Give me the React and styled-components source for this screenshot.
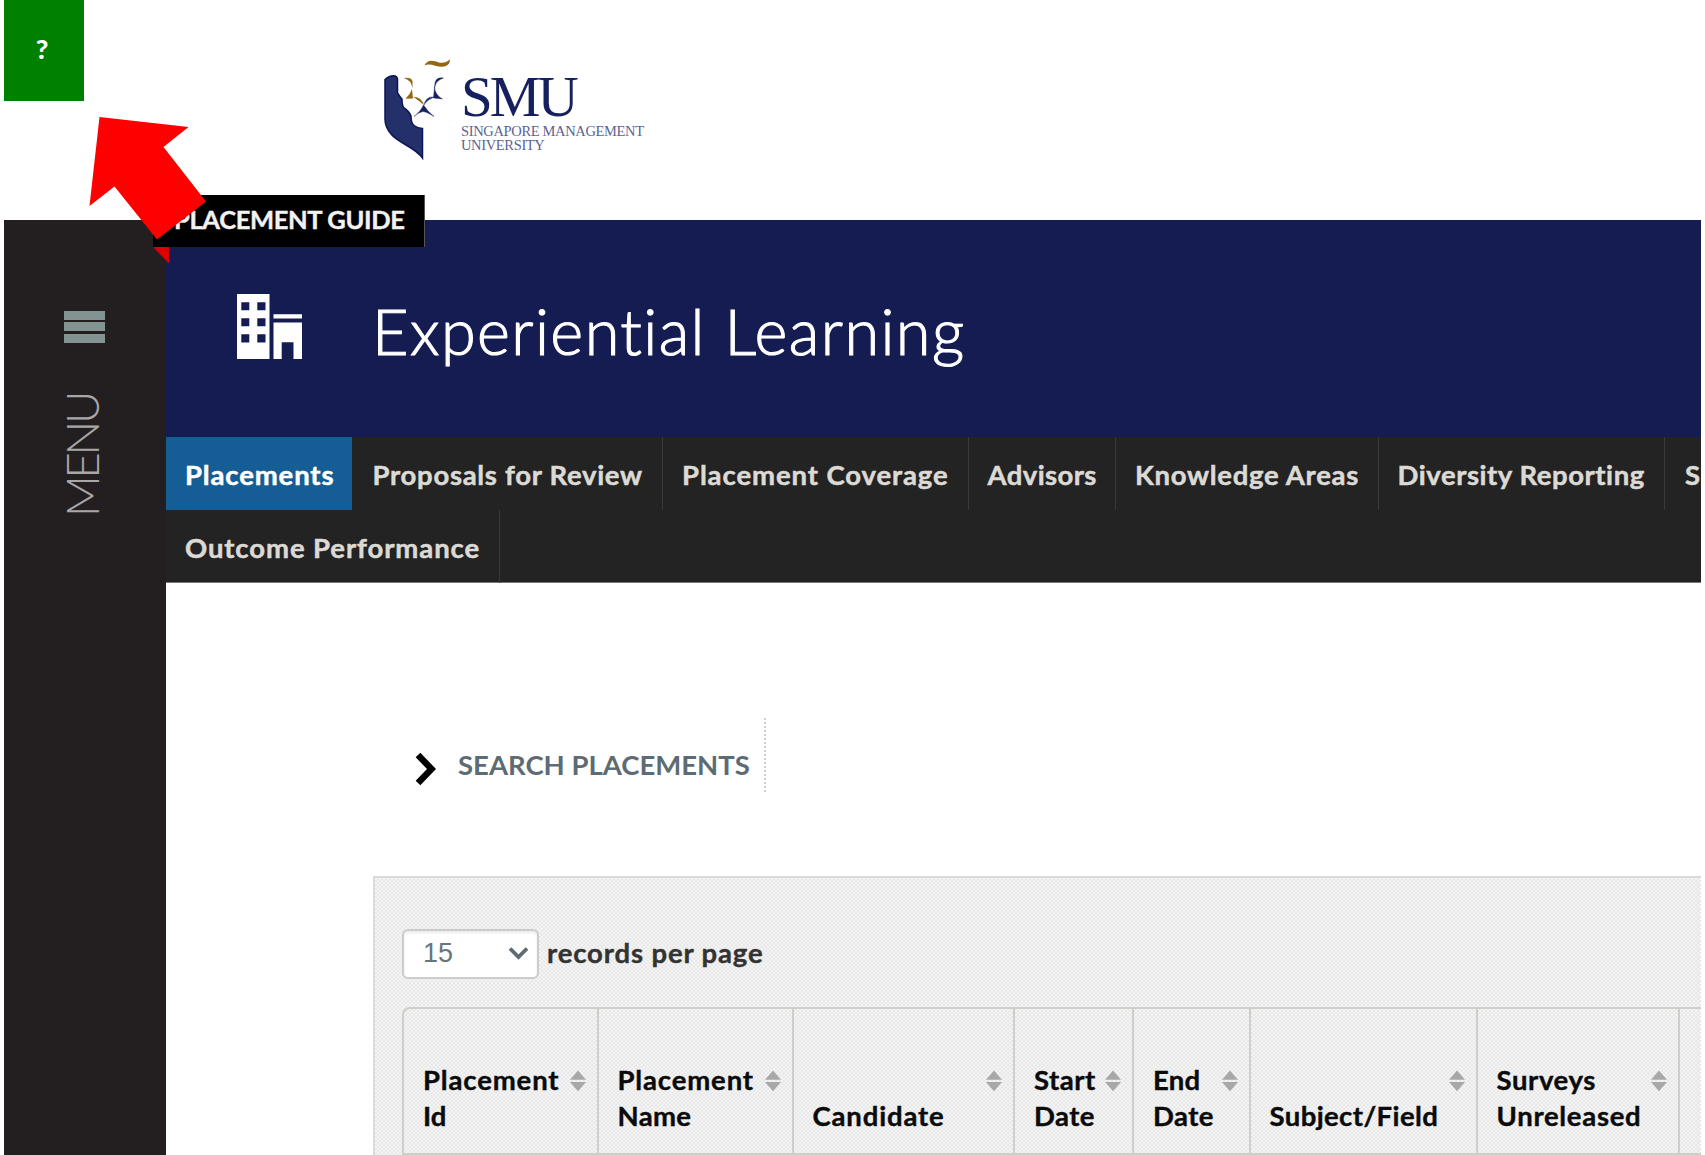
import React from "react";
import styled, { createGlobalStyle } from "styled-components";

const Global = createGlobalStyle`
  *{box-sizing:border-box}
  html,body{margin:0;background:#fff;overflow:hidden}
  body{font-family:Lato,"Open Sans",sans-serif;}
`;

const Page = styled.div`
  position: relative;
  width: 1705px;
  height: 1155px;
  padding: 0 4px;
  overflow: hidden;
  display: flex;
  flex-direction: column;
`;
const Header = styled.header`
  height: 220px;
  flex: none;
  display: flex;
  align-items: flex-start;
`;
const HelpButton = styled.div`
  width: 80px;
  height: 100.5px;
  background: #008000;
  color: #fff;
  font-size: 27px;
  font-weight: 900;
  line-height: 98px;
  padding-right: 4px;
  text-align: center;
`;
const Logo = styled.div`
  display: flex;
  margin: 58px 0 0 298px;
`;
const LogoText = styled.div`
  font-family: "Liberation Serif", serif;
  color: #17205f;
  margin: 10px 0 0 11px;
`;
const LogoName = styled.div`
  font-size: 57px;
  line-height: 58px;
  letter-spacing: -3px;
`;
const LogoSub = styled.div`
  font-size: 14.5px;
  line-height: 13.5px;
  position: relative;
  top: -1px;
  color: #5c6492;
  white-space: nowrap;
  letter-spacing: -0.35px;
`;
const Body = styled.div`
  flex: 1;
  min-height: 0;
  display: flex;
`;
const Sidebar = styled.aside`
  width: 162px;
  flex: none;
  background: #231f20;
  display: flex;
  flex-direction: column;
  align-items: center;
  padding: 91px 0 0 0;
`;
const Bars = styled.div`
  display: grid;
  gap: 2.6px;
  width: 41px;
  margin-right: 2px;
`;
const Bar = styled.div`
  height: 8.8px;
  background: #829392;
`;
const MenuLabel = styled.div`
  writing-mode: vertical-rl;
  transform: rotate(180deg);
  margin: 51px 6px 0 0;
  font-size: 46px;
  line-height: 56px;
  font-weight: 300;
  color: #a9a6a7;
  letter-spacing: -3.4px;
`;
const Main = styled.main`
  flex: 1;
  min-width: 0;
  overflow: hidden;
  display: flex;
  flex-direction: column;
`;
const Banner = styled.div`
  height: 217px;
  flex: none;
  background: #141c52;
  display: flex;
  padding: 74px 0 0 71px;
`;
const Title = styled.h1`
  margin: 0 0 0 70px;
  color: #fff;
  font-size: 63px;
  line-height: 73px;
  font-weight: 300;
  white-space: nowrap;
  letter-spacing: 1.4px;
  -webkit-text-stroke: 1.1px #fff;
`;
const Nav = styled.nav`
  flex: none;
  height: 146px;
  background: #232323;
  border-bottom: 1px solid #777;
`;
const NavRow = styled.div`
  display: flex;
  height: 73px;
`;
const NavItem = styled.div`
  width: ${(p) => p.$w}px;
  flex: none;
  padding-left: ${(p) => p.$pl}px;
  line-height: 75px;
  font-size: 27.5px;
  font-weight: 700;
  white-space: nowrap;
  color: ${(p) => (p.$active ? "#fff" : "#dcdad5")};
  background: ${(p) => (p.$active ? "#155d95" : "transparent")};
  border-right: ${(p) => (p.$active ? "0" : "1.5px solid #393939")};
  letter-spacing: ${(p) => p.$ls || 0}px;
  -webkit-text-stroke: 0.5px currentColor;
`;
const SearchToggle = styled.div`
  display: flex;
  width: 393px;
  height: 74px;
  flex: none;
  margin: 135px 0 0 207px;
  padding: 21px 0 0 41px;
  align-items: flex-start;
  border-right: 2px dotted #cfcfcf;
`;
const SearchChevron = styled.svg`
  margin-top: 13px;
  flex: none;
`;
const SearchText = styled.span`
  margin: 8px 0 0 21px;
  font-size: 27.5px;
  line-height: 36px;
  font-weight: 700;
  white-space: nowrap;
  color: #5d6b74;
`;
const Panel = styled.section`
  flex: 1;
  margin: 84px 0 0 207px;
  padding: 51px 0 0 27px;
  border: 2px solid #dadada;
  border-width: 2px 0 0 2px;
  background: repeating-conic-gradient(#e8e8e8 0 25%, #f4f4f4 0 50%) 0 0 / 4px 4px;
`;
const Records = styled.div`
  display: flex;
  height: 50px;
`;
const Select = styled.div`
  width: 137px;
  height: 50px;
  display: flex;
  align-items: center;
  justify-content: space-between;
  padding: 0 8px 2px 19px;
  background: #fff;
  border: 2px solid #ccc;
  border-radius: 6px;
  box-shadow: inset 0 2px 3px rgba(0,0,0,.08);
  color: #67757d;
  font-family: "Liberation Sans", sans-serif;
  font-size: 27px;
`;
const RecordsLabel = styled.span`
  margin-left: 8px;
  font-size: 27.5px;
  line-height: 47px;
  font-weight: 700;
  color: #333;
  white-space: nowrap;
  letter-spacing: 0.85px;
  -webkit-text-stroke: 0.4px currentColor;
`;
const Table = styled.div`
  display: flex;
  margin-top: 28px;
  height: 148px;
  border: 2px solid #cfcfca;
  border-right: 0;
  border-radius: 8px 0 0 0;
`;
const Th = styled.div`
  width: ${(p) => p.$w}px;
  flex: none;
  display: flex;
  align-items: flex-end;
  justify-content: space-between;
  padding: 0 11px 18px 19px;
  border-right: 2px solid #cfcfca;
`;
const ThText = styled.div`
  font-size: 27.5px;
  line-height: 36.7px;
  font-weight: 700;
  color: #0b0b0b;
  white-space: nowrap;
  -webkit-text-stroke: 0.4px currentColor;
`;
const ThLine = styled.div`
  letter-spacing: ${(p) => p.$ls}px;
`;
const SortSvg = styled.svg`
  flex: none;
  margin: 0 0 43px -30px;
`;
const Guide = styled.div`
  position: absolute;
  left: 153px;
  top: 194.5px;
  width: 272px;
  height: 52.5px;
  padding-left: 21px;
  line-height: 49px;
  background: #000;
  border-right: 1.5px solid #555;
  color: #f2f2f2;
  font-size: 25.5px;
  font-weight: 700;
  white-space: nowrap;
  letter-spacing: -0.35px;
  -webkit-text-stroke: 0.4px currentColor;
`;
const Overlay = styled.svg`
  position: absolute;
  left: 80px;
  top: 110px;
`;

const SortIcon = () => (
  <SortSvg width="16" height="22" viewBox="0 0 16 22">
    <path d="M8 0.5 16 9.7H0ZM0 12H16L8 21.3Z" fill="#a8a8a8" />
  </SortSvg>
);

const nav = [
  ["Placements", 185.5, true, 0.85, 19],
  ["Proposals for Review", 311, false, 0.7, 21],
  ["Placement Coverage", 306.5, false, 0.9, 19.5],
  ["Advisors", 146.5, false, 0.4, 18.5],
  ["Knowledge Areas", 263.5, false, 0.7, 19.5],
  ["Diversity Reporting", 286, false, 0.55, 18.5],
  ["S", 40, false, 0, 20],
];
const columns = [
  [[["Placement", 0.85], ["Id", 0]], 194.5],
  [[["Placement", 0.85], ["Name", 0.3]], 195],
  [[["Candidate", 0.85]], 221.5],
  [[["Start", 0.5], ["Date", 0.4]], 119],
  [[["End", 0.3], ["Date", 0.4]], 116.5],
  [[["Subject/Field", 0.4]], 227],
  [[["Surveys", 0.6], ["Unreleased", 0.7]], 202],
];

export default function App() {
  return (
    <Page>
      <Global />
      <Header>
        <HelpButton>?</HelpButton>
        <Logo>
          <svg width="68" height="102" viewBox="382 58 68 102">
            <path d="M385 79.500Q389 76 393.500 75.800Q397 76 397.500 79V93Q400 97 402 99Q402 106 404 108Q409 111 411 116Q411 123 414 125.500Q418 128.500 422.500 128.500V158C415 147 398 143 391 134Q385 127 385 119Z" fill="#233069" stroke="#0c1459" strokeWidth="1.500" />
            <path d="M424.300 65.500C428 59 433 60.500 439 62.500C443 63.500 447 62 450 59.500C450 64 447 66.500 442 66.800C436 67 430 62.500 424.300 65.500Z" fill="#926814" />
            <path d="M404 78Q411 77 412.500 81V88Q411 80 404 78ZM412 89 413 98.500 405.500 98.800Q410 95 412 89ZM413.500 97Q421 96.500 424 105Q420 101.500 413.500 97Z" fill="#926814" />
            <path d="M443.500 78Q436 77 435 83L434.500 88Q436 80 443.500 78ZM434.500 87Q435 95 442.500 99L433.500 98ZM434 97Q426 96 424 105Q426 100.500 434 97ZM423.500 105Q428 112 434 116.500Q427 112 423.500 111.500Q419 112 414 116.500Q421 111 423.500 105Z" fill="#17205f" stroke="#17205f" strokeWidth="0.400" />
          </svg>
          <LogoText>
            <LogoName>SMU</LogoName>
            <LogoSub>SINGAPORE MANAGEMENT</LogoSub>
            <LogoSub>UNIVERSITY</LogoSub>
          </LogoText>
        </Logo>
      </Header>
      <Body>
        <Sidebar>
          <Bars><Bar /><Bar /><Bar /></Bars>
          <MenuLabel>MENU</MenuLabel>
        </Sidebar>
        <Main>
          <Banner>
            <svg width="65" height="65" viewBox="0 0 65 65" fill="#fff" fillRule="evenodd">
              <path d="M0 0H32.500V65H0ZM4.300 8.300V16.300H12.300V8.300ZM20.300 8.300V16.300H28.500V8.300ZM4.300 24.300V32.300H12.300V24.300ZM20.300 24.300V32.300H28.500V24.300ZM4.300 40.300V48.500H12.300V40.300ZM20.300 40.300V48.500H28.500V40.300ZM36.500 20.300H65V24.500H36.500ZM36.500 28.500H65V65H56.500V48.300H44.700V65H36.500Z" />
            </svg>
            <Title>Experiential Learning</Title>
          </Banner>
          <Nav>
            <NavRow>
              {nav.map(([t, w, a, ls, pl]) => (
                <NavItem key={t} $w={w} $active={a} $ls={ls} $pl={pl}>{t}</NavItem>
              ))}
            </NavRow>
            <NavRow>
              <NavItem $w={334} $pl={19} $ls={0.9}>Outcome Performance</NavItem>
            </NavRow>
          </Nav>
          <SearchToggle>
            <SearchChevron width="23" height="34" viewBox="0 0 23 34">
              <path d="M4 3 17.500 17 4 31" fill="none" stroke="#000" strokeWidth="6.500" />
            </SearchChevron>
            <SearchText>SEARCH PLACEMENTS</SearchText>
          </SearchToggle>
          <Panel>
            <Records>
              <Select>
                15
                <svg width="21" height="14" viewBox="0 0 21 14">
                  <path d="M2 2.500 10.500 11 19 2.500" fill="none" stroke="#5d6b74" strokeWidth="3.800" />
                </svg>
              </Select>
              <RecordsLabel>records per page</RecordsLabel>
            </Records>
            <Table>
              {columns.map(([lines, w], i) => (
                <Th key={i} $w={w}>
                  <ThText>{lines.map(([l, ls]) => <ThLine key={l} $ls={ls}>{l}</ThLine>)}</ThText>
                  <SortIcon />
                </Th>
              ))}
            </Table>
          </Panel>
        </Main>
      </Body>
      <Guide>PLACEMENT GUIDE</Guide>
      <Overlay width="140" height="160" viewBox="80 110 140 160">
        <path d="M153 247H169V263.500Z" fill="#dc0000" />
        <path d="M99.500 117 188.500 127 163.500 147 206 201.500 157 239.500 114.500 186.500 89.500 206Z" fill="#f00" />
      </Overlay>
    </Page>
  );
}
